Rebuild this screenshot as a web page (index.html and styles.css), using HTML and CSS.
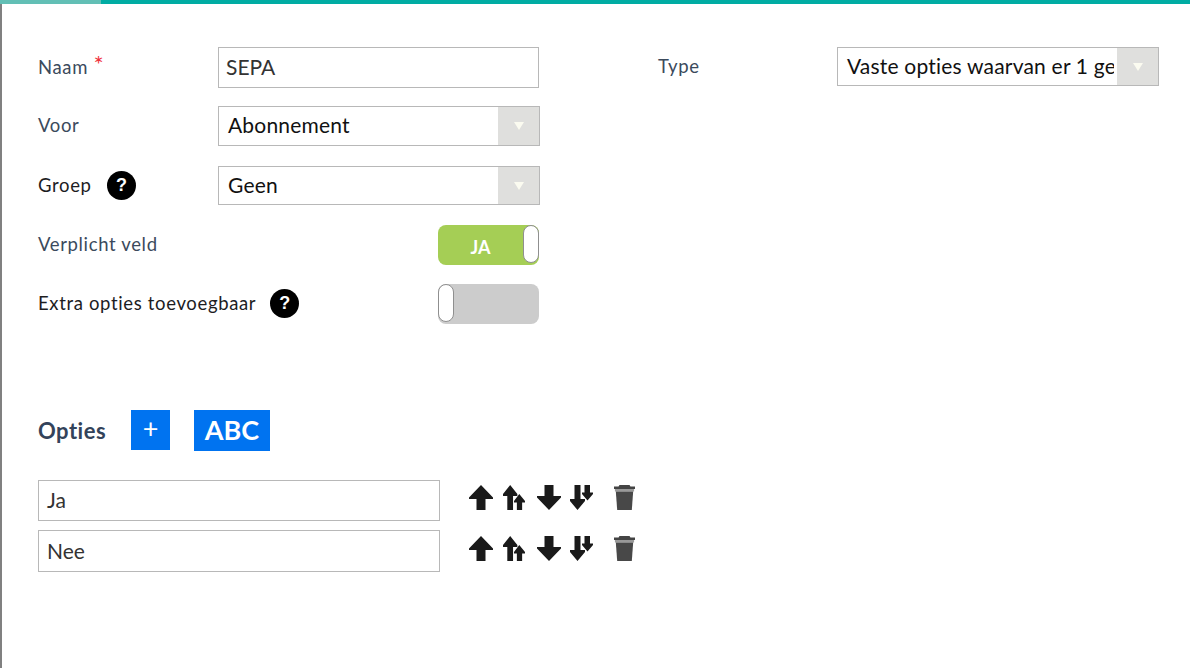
FILE: index.html
```html
<!DOCTYPE html>
<html lang="nl">
<head>
<meta charset="utf-8">
<title>SEPA</title>
<link rel="stylesheet" href="styles.css">
</head>
<body>
<svg class="sprites" width="0" height="0" aria-hidden="true">
  <symbol id="up" viewBox="0 0 24 25"><path d="M12 0 24 12.5 24 14H16.5V25H7.5V14H0V12.5Z"/></symbol>
  <symbol id="upup" viewBox="0 0 23 25" preserveAspectRatio="none"><path d="M7.5 0 15 9V11H10.5V25H4.5V11H0V9Z"/><path d="M17 9 23 16V17.5H20V25H14.5V17.5H11.5V16Z"/></symbol>
  <symbol id="down" viewBox="0 0 24 25"><path d="M7.5 0H16.5V11H24V12.5L12 25 0 12.5V11H7.5Z"/></symbol>
  <symbol id="downdown" viewBox="0 0 23 25"><path d="M4.5 0H10.5V14H15V16L7.5 25 0 16V14H4.5Z"/><path d="M14.5 0H20V7.5H23V9L17.5 15.5 12 9V7.5H14.5Z"/></symbol>
  <symbol id="trash" viewBox="0 0 23 25" preserveAspectRatio="none"><path class="trash-lid" d="M6 0H17L18 1.5H23V4H0V1.5H5Z"/><path class="trash-mid" d="M1 4H22V6.5H1Z"/><path class="trash-body" d="M2 6.5H21L19.5 25H3.5Z"/></symbol>
</svg>
<div class="topbar"><div class="topbar-progress"></div></div>
<main class="page">
  <section class="settings">
    <div class="form-grid">
      <span class="label label-slate label-naam">Naam <sup class="required">*</sup></span>
      <div class="input field-naam">SEPA</div>

      <span class="label label-slate">Voor</span>
      <div class="select field-voor"><span class="select-text">Abonnement</span><span class="select-arrow"><i></i></span></div>

      <span class="label">Groep <b class="help help-groep">?</b></span>
      <div class="select field-groep"><span class="select-text">Geen</span><span class="select-arrow"><i></i></span></div>

      <span class="label label-slate">Verplicht veld</span>
      <div class="toggle toggle-on"><span class="toggle-text">JA</span><span class="knob"></span></div>

      <span class="label">Extra opties toevoegbaar <b class="help help-extra">?</b></span>
      <div class="toggle toggle-off"><span class="knob"></span></div>
    </div>
    <div class="type-col">
      <span class="label label-slate">Type</span>
      <div class="select field-type"><span class="select-text">Vaste opties waarvan er 1 gekozen moet worden</span><span class="select-arrow"><i></i></span></div>
    </div>
  </section>

  <section class="options">
    <div class="options-head">
      <h2 class="options-title">Opties</h2>
      <button class="btn btn-plus" type="button">+</button>
      <button class="btn btn-abc" type="button">ABC</button>
    </div>
    <div class="option-row">
      <div class="input option-input">Ja</div>
      <div class="icons">
        <svg class="ic ic-up"><use href="#up"/></svg>
        <svg class="ic ic-upup"><use href="#upup"/></svg>
        <svg class="ic ic-down"><use href="#down"/></svg>
        <svg class="ic ic-downdown"><use href="#downdown"/></svg>
        <svg class="ic ic-trash"><use href="#trash"/></svg>
      </div>
    </div>
    <div class="option-row">
      <div class="input option-input option-input-tall">Nee</div>
      <div class="icons">
        <svg class="ic ic-up"><use href="#up"/></svg>
        <svg class="ic ic-upup"><use href="#upup"/></svg>
        <svg class="ic ic-down"><use href="#down"/></svg>
        <svg class="ic ic-downdown"><use href="#downdown"/></svg>
        <svg class="ic ic-trash"><use href="#trash"/></svg>
      </div>
    </div>
  </section>
</main>
</body>
</html>
```
FILE: styles.css
```css
* { box-sizing: border-box; }
html, body { margin: 0; padding: 0; height: 100%; background: #fff; overflow: hidden; }
body { font-family: Lato, "Liberation Sans", sans-serif; color: #111; display: flex; flex-direction: column; }
.sprites { position: absolute; }

.topbar { height: 4px; background: #00aca3; flex: none; }
.topbar-progress { width: 101px; height: 4px; background: #62bfb5; }

.page { flex: 1; border-left: 2px solid #808080; padding: 43px 0 0 36px; }

.settings { display: flex; height: 277px; }
.form-grid {
  width: 501px;
  display: grid;
  grid-template-columns: 180px 321px;
  grid-template-rows: 59px 60px 59px 59px 40px;
}
.type-col { margin-left: 119px; display: grid; grid-template-columns: 179px 322px; align-items: start; }

.label { font-size: 18.5px; line-height: 24px; color: #1d1d1f; padding-top: 7px; display: flex; align-items: flex-start; align-self: start; white-space: pre; letter-spacing: .65px; }
.label-slate { color: #3b4a5c; }
.label-naam { padding-top: 8px; }
.required { color: #f0323c; font-size: 24px; line-height: 18px; margin: 0; }

.help {
  width: 29px; height: 29px; border-radius: 50%;
  background: #000; color: #fff; font: 700 18px/29px "Liberation Sans", sans-serif;
  letter-spacing: 0; text-align: center; flex: none;
}
.help-groep { margin-left: 10px; margin-top: -2px; }
.help-extra { margin-left: 9px; margin-top: -2px; }

.input {
  border: 1px solid #b8b8b8; background: #fff;
  font-size: 21px; color: #333; padding: 0 0 2px 7px;
  display: flex; align-items: center;
}
.field-naam { height: 41px; width: 321px; }

.select {
  border: 1px solid #b8b8b8; background: #fff;
  display: flex; align-items: center; overflow: hidden;
  font-size: 21px; color: #111; letter-spacing: .2px;
}
.select-text { flex: 1; min-width: 0; padding: 0 0 3px 9px; margin-right: 3px; white-space: nowrap; overflow: hidden; }
.select-arrow { width: 41px; align-self: stretch; background: #dfdfdd; display: flex; align-items: center; justify-content: center; flex: none; }
.select-arrow i { width: 0; height: 0; border-left: 5px solid transparent; border-right: 5px solid transparent; border-top: 8px solid #fbfbf0; }
.field-voor { height: 40px; width: 322px; }
.field-groep { height: 39px; width: 322px; }
.field-type { height: 39px; width: 322px; }

.toggle {
  width: 101px; height: 40px; border-radius: 8px; margin-left: 220px;
  position: relative; display: flex; align-items: center; justify-content: center;
}
.toggle-on { background: #a5ce55; }
.toggle-off { background: #cccccc; }
.toggle-text { color: #fff; font-weight: 700; font-size: 18px; margin-top: 4px; margin-right: 16px; }
.knob {
  position: absolute; top: 0; width: 16px; height: 38px;
  background: #fff; border: 1px solid #8f8f8f; border-radius: 8px;
}
.toggle-on .knob { right: 0; }
.toggle-off .knob { left: 0; }

.options-head { display: flex; align-items: flex-start; height: 70px; margin-top: 86px; }
.options-title { margin: 6px 25px 0 0; font-size: 22px; font-weight: 700; line-height: 30px; letter-spacing: .5px; color: #33435a; width: 68px; white-space: nowrap; }
.btn { border: 0; background: #0073f0; color: #fff; padding: 0; font-family: inherit; font-weight: 700; }
.btn-plus { width: 39px; height: 40px; font-size: 27px; line-height: 36px; font-weight: 400; padding-bottom: 4px; }
.btn-abc { width: 76px; height: 41px; font-size: 27px; margin-left: 24px; padding-bottom: 2px; }

.option-row { display: flex; align-items: flex-start; height: 50px; }
.option-input { width: 402px; height: 41px; padding-left: 8px; }
.option-input-tall { height: 42px; }
.icons { display: flex; margin: 5px 0 0 29px; }
.option-row + .option-row .icons { margin-top: 6px; }
.ic { height: 25px; fill: #1a1a1a; filter: blur(.6px); display: block; }
.ic-up { width: 24px; }
.ic-upup { width: 22px; margin-left: 10px; }
.ic-down { width: 24px; margin-left: 12px; }
.ic-downdown { width: 23px; margin-left: 9px; }
.ic-trash { width: 21px; margin-left: 21px; }
.trash-lid { fill: #444; }
.trash-mid { fill: #999; }
.trash-body { fill: #484848; }
```
